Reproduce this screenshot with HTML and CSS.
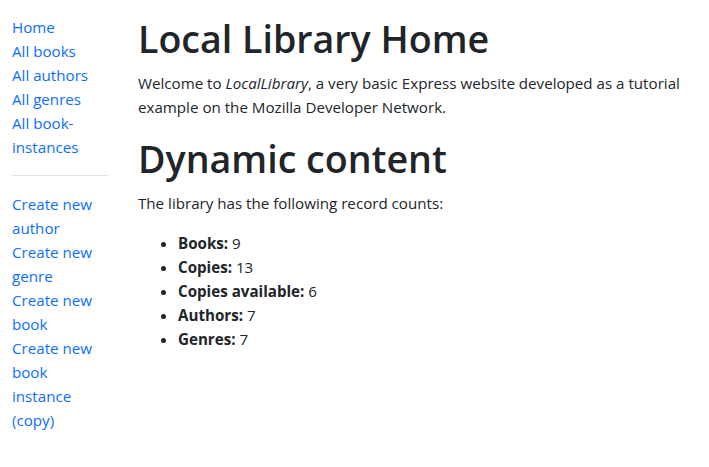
FILE: index.html
```
<!DOCTYPE html>
<html lang="en">
<head>
<meta charset="utf-8">
<title>Local Library</title>
<link rel="stylesheet" href="styles.css">
</head>
<body>
<div class="page">
  <nav class="sidebar">
    <ul class="sidebar-nav">
      <li><a href="#">Home</a></li>
      <li><a href="#">All books</a></li>
      <li><a href="#">All authors</a></li>
      <li><a href="#">All genres</a></li>
      <li><a href="#">All book-instances</a></li>
    </ul>
    <hr class="divider">
    <ul class="sidebar-nav">
      <li><a href="#">Create new author</a></li>
      <li><a href="#">Create new genre</a></li>
      <li><a href="#">Create new book</a></li>
      <li><a href="#">Create new book instance (copy)</a></li>
    </ul>
  </nav>
  <main class="content">
    <h1 class="title">Local Library Home</h1>
    <p class="text">Welcome to <em>LocalLibrary</em>, a very basic Express website developed as a tutorial example on the Mozilla Developer Network.</p>
    <h1 class="title">Dynamic content</h1>
    <p class="text">The library has the following record counts:</p>
    <ul class="counts">
      <li><strong>Books:</strong> 9</li>
      <li><strong>Copies:</strong> 13</li>
      <li><strong>Copies available:</strong> 6</li>
      <li><strong>Authors:</strong> 7</li>
      <li><strong>Genres:</strong> 7</li>
    </ul>
  </main>
</div>
</body>
</html>
```
FILE: styles.css
```
html, body {
  margin: 0;
  padding: 0;
  background: #fff;
}
body {
  font-family: "Open Sans", "Noto Sans", sans-serif;
  font-size: 15.15px;
  line-height: 24px;
  color: #212529;
}
.page {
  display: flex;
  padding: 15px 12px 0 12px;
}
.sidebar {
  width: 96px;
  flex: none;
}
.sidebar-nav {
  list-style: none;
  margin: 0;
  padding: 0;
}
.sidebar-nav a {
  color: #0d6efd;
  text-decoration: none;
}
.divider {
  margin: 16px 0 16px;
  border: 0;
  border-top: 1px solid #dee2e6;
  height: 0;
}
.content {
  flex: 1;
  margin-left: 30px;
}
.title {
  margin: 0 0 8px;
  font-size: 37.6px;
  line-height: 48px;
  font-weight: 600;
}
.text {
  margin: 0 0 16px;
}
.counts {
  margin: 0;
  padding-left: 40px;
}
.counts strong {
  font-weight: 700;
}
```
